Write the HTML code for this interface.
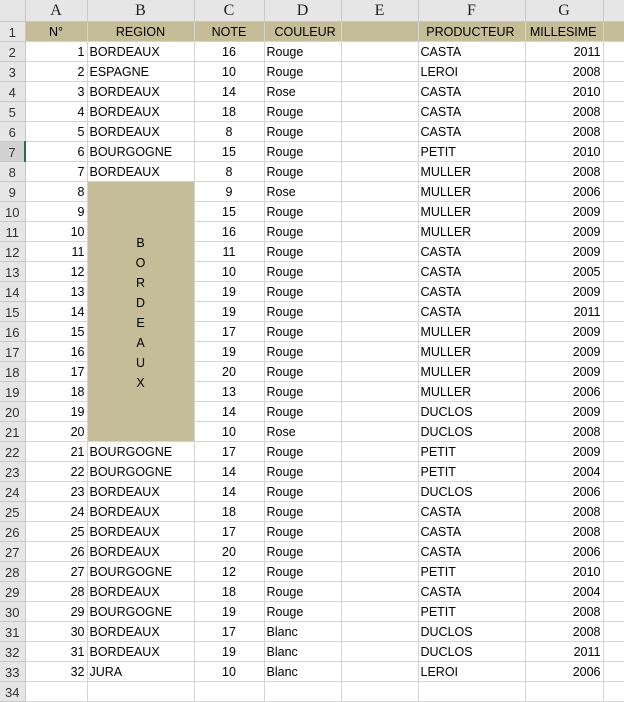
<!DOCTYPE html>
<html><head><meta charset="utf-8"><style>
body{margin:0;background:#fff;width:624px;height:684px;overflow:hidden}
table{border-collapse:collapse;table-layout:fixed;width:646px;font-family:"Liberation Sans",sans-serif;font-size:12.5px;color:#000}
td{height:17px;padding:2px 2px 0 2px;border-right:1px solid #d4d4d4;border-bottom:1px solid #d4d4d4;white-space:nowrap;overflow:hidden;line-height:17px}
tr.h td{background:#e6e6e6;font-family:"Liberation Serif",serif;font-size:16px;text-align:center;height:21px;line-height:21px;padding:0;border-color:#c8c8c8;color:#222}
td.rh{background:#e6e6e6;text-align:center;color:#333;border-color:#c8c8c8;font-size:13px;padding:2px 0 0 0}
tr.t td{background:#c4bd97}
tr.t td.rh{background:#e6e6e6}
.r{text-align:right}.c{text-align:center}
td.m{background:#c4bd97;text-align:center;vertical-align:middle;line-height:20px}
</style></head><body>
<table>
<colgroup><col style="width:25px"><col style="width:62px"><col style="width:107px"><col style="width:70px"><col style="width:77px"><col style="width:77px"><col style="width:107px"><col style="width:78px"><col style="width:43px"></colgroup>
<tr class="h"><td></td><td>A</td><td>B</td><td>C</td><td>D</td><td>E</td><td>F</td><td>G</td><td></td></tr>
<tr class="t"><td class="rh">1</td><td class="c">N°</td><td class="c">REGION</td><td class="c">NOTE</td><td style="padding-left:10px">COULEUR</td><td></td><td class="r" style="padding-right:10px">PRODUCTEUR</td><td class="r" style="padding-right:6px">MILLESIME</td><td></td></tr>
<tr><td class="rh">2</td><td class="r">1</td><td>BORDEAUX</td><td class="c">16</td><td>Rouge</td><td></td><td>CASTA</td><td class="r">2011</td><td></td></tr>
<tr><td class="rh">3</td><td class="r">2</td><td>ESPAGNE</td><td class="c">10</td><td>Rouge</td><td></td><td>LEROI</td><td class="r">2008</td><td></td></tr>
<tr><td class="rh">4</td><td class="r">3</td><td>BORDEAUX</td><td class="c">14</td><td>Rose</td><td></td><td>CASTA</td><td class="r">2010</td><td></td></tr>
<tr><td class="rh">5</td><td class="r">4</td><td>BORDEAUX</td><td class="c">18</td><td>Rouge</td><td></td><td>CASTA</td><td class="r">2008</td><td></td></tr>
<tr><td class="rh">6</td><td class="r">5</td><td>BORDEAUX</td><td class="c">8</td><td>Rouge</td><td></td><td>CASTA</td><td class="r">2008</td><td></td></tr>
<tr><td class="rh" style="background:#d2d2d2;border-right:2px solid #217346">7</td><td class="r">6</td><td>BOURGOGNE</td><td class="c">15</td><td>Rouge</td><td></td><td>PETIT</td><td class="r">2010</td><td></td></tr>
<tr><td class="rh">8</td><td class="r">7</td><td>BORDEAUX</td><td class="c">8</td><td>Rouge</td><td></td><td>MULLER</td><td class="r">2008</td><td></td></tr>
<tr><td class="rh">9</td><td class="r">8</td><td class="m" rowspan="13">B<br>O<br>R<br>D<br>E<br>A<br>U<br>X</td><td class="c">9</td><td>Rose</td><td></td><td>MULLER</td><td class="r">2006</td><td></td></tr>
<tr><td class="rh">10</td><td class="r">9</td><td class="c">15</td><td>Rouge</td><td></td><td>MULLER</td><td class="r">2009</td><td></td></tr>
<tr><td class="rh">11</td><td class="r">10</td><td class="c">16</td><td>Rouge</td><td></td><td>MULLER</td><td class="r">2009</td><td></td></tr>
<tr><td class="rh">12</td><td class="r">11</td><td class="c">11</td><td>Rouge</td><td></td><td>CASTA</td><td class="r">2009</td><td></td></tr>
<tr><td class="rh">13</td><td class="r">12</td><td class="c">10</td><td>Rouge</td><td></td><td>CASTA</td><td class="r">2005</td><td></td></tr>
<tr><td class="rh">14</td><td class="r">13</td><td class="c">19</td><td>Rouge</td><td></td><td>CASTA</td><td class="r">2009</td><td></td></tr>
<tr><td class="rh">15</td><td class="r">14</td><td class="c">19</td><td>Rouge</td><td></td><td>CASTA</td><td class="r">2011</td><td></td></tr>
<tr><td class="rh">16</td><td class="r">15</td><td class="c">17</td><td>Rouge</td><td></td><td>MULLER</td><td class="r">2009</td><td></td></tr>
<tr><td class="rh">17</td><td class="r">16</td><td class="c">19</td><td>Rouge</td><td></td><td>MULLER</td><td class="r">2009</td><td></td></tr>
<tr><td class="rh">18</td><td class="r">17</td><td class="c">20</td><td>Rouge</td><td></td><td>MULLER</td><td class="r">2009</td><td></td></tr>
<tr><td class="rh">19</td><td class="r">18</td><td class="c">13</td><td>Rouge</td><td></td><td>MULLER</td><td class="r">2006</td><td></td></tr>
<tr><td class="rh">20</td><td class="r">19</td><td class="c">14</td><td>Rouge</td><td></td><td>DUCLOS</td><td class="r">2009</td><td></td></tr>
<tr><td class="rh">21</td><td class="r">20</td><td class="c">10</td><td>Rose</td><td></td><td>DUCLOS</td><td class="r">2008</td><td></td></tr>
<tr><td class="rh">22</td><td class="r">21</td><td>BOURGOGNE</td><td class="c">17</td><td>Rouge</td><td></td><td>PETIT</td><td class="r">2009</td><td></td></tr>
<tr><td class="rh">23</td><td class="r">22</td><td>BOURGOGNE</td><td class="c">14</td><td>Rouge</td><td></td><td>PETIT</td><td class="r">2004</td><td></td></tr>
<tr><td class="rh">24</td><td class="r">23</td><td>BORDEAUX</td><td class="c">14</td><td>Rouge</td><td></td><td>DUCLOS</td><td class="r">2006</td><td></td></tr>
<tr><td class="rh">25</td><td class="r">24</td><td>BORDEAUX</td><td class="c">18</td><td>Rouge</td><td></td><td>CASTA</td><td class="r">2008</td><td></td></tr>
<tr><td class="rh">26</td><td class="r">25</td><td>BORDEAUX</td><td class="c">17</td><td>Rouge</td><td></td><td>CASTA</td><td class="r">2008</td><td></td></tr>
<tr><td class="rh">27</td><td class="r">26</td><td>BORDEAUX</td><td class="c">20</td><td>Rouge</td><td></td><td>CASTA</td><td class="r">2006</td><td></td></tr>
<tr><td class="rh">28</td><td class="r">27</td><td>BOURGOGNE</td><td class="c">12</td><td>Rouge</td><td></td><td>PETIT</td><td class="r">2010</td><td></td></tr>
<tr><td class="rh">29</td><td class="r">28</td><td>BORDEAUX</td><td class="c">18</td><td>Rouge</td><td></td><td>CASTA</td><td class="r">2004</td><td></td></tr>
<tr><td class="rh">30</td><td class="r">29</td><td>BOURGOGNE</td><td class="c">19</td><td>Rouge</td><td></td><td>PETIT</td><td class="r">2008</td><td></td></tr>
<tr><td class="rh">31</td><td class="r">30</td><td>BORDEAUX</td><td class="c">17</td><td>Blanc</td><td></td><td>DUCLOS</td><td class="r">2008</td><td></td></tr>
<tr><td class="rh">32</td><td class="r">31</td><td>BORDEAUX</td><td class="c">19</td><td>Blanc</td><td></td><td>DUCLOS</td><td class="r">2011</td><td></td></tr>
<tr><td class="rh">33</td><td class="r">32</td><td>JURA</td><td class="c">10</td><td>Blanc</td><td></td><td>LEROI</td><td class="r">2006</td><td></td></tr>
<tr><td class="rh">34</td><td></td><td></td><td></td><td></td><td></td><td></td><td></td><td></td></tr>
</table>
</body></html>
